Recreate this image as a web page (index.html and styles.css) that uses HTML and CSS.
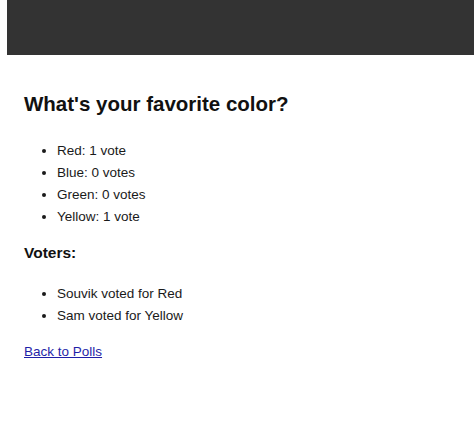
FILE: index.html
```html
<!DOCTYPE html>
<html lang="en">
<head>
<meta charset="utf-8">
<title>Poll results</title>
<link rel="stylesheet" href="styles.css">
</head>
<body>
<header class="topbar"></header>
<main class="content">
  <h1 class="poll-title">What's your favorite color?</h1>
  <ul class="list results">
    <li>Red: 1 vote</li>
    <li>Blue: 0 votes</li>
    <li>Green: 0 votes</li>
    <li>Yellow: 1 vote</li>
  </ul>
  <h2 class="section-title">Voters:</h2>
  <ul class="list voters">
    <li>Souvik voted for Red</li>
    <li>Sam voted for Yellow</li>
  </ul>
  <p class="back"><a href="#" class="back-link">Back to Polls</a></p>
</main>
</body>
</html>
```
FILE: styles.css
```css
html, body {
  margin: 0;
  padding: 0;
  background: #ffffff;
}
body {
  font-family: "Liberation Sans", Arial, sans-serif;
  color: #1a1a1a;
  font-size: 13.5px;
}
.topbar {
  margin-left: 7px;
  height: 55px;
  background: #333333;
}
.content {
  padding: 0 24px;
}
.poll-title {
  margin: 37px 0 24px;
  font-size: 20.5px;
  line-height: 24px;
  font-weight: bold;
  color: #111111;
}
.list {
  margin: 0;
  padding-left: 33px;
  line-height: 22px;
}
.section-title {
  margin: 15px 0 20px;
  font-size: 15.5px;
  line-height: 20px;
  font-weight: bold;
  color: #111111;
}
.back {
  margin: 17px 0 0;
  line-height: 16px;
}
.back-link {
  color: #1f1fa8;
  text-decoration: underline;
}
```
